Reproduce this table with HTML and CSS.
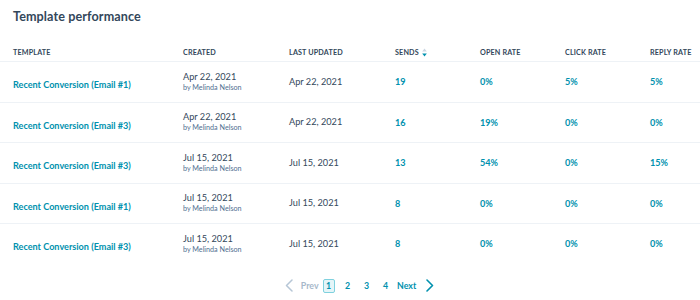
FILE: index.html
```html
<!DOCTYPE html>
<html>
<head>
<meta charset="utf-8">
<link rel="stylesheet" href="styles.css">
</head>
<body>
<div class="card">
  <h1 class="title">Template performance</h1>
  <table class="perf">
    <colgroup>
      <col class="c-tpl"><col class="c-created"><col class="c-upd"><col class="c-num"><col class="c-num"><col class="c-num"><col class="c-last">
    </colgroup>
    <thead>
      <tr>
        <th>Template</th>
        <th>Created</th>
        <th>Last updated</th>
        <th><span class="sortable">Sends <svg class="sort" width="5" height="9" viewBox="0 0 5 9"><path d="M2.5 0.5 L4.8 3.5 L0.2 3.5 Z" fill="#cbd6e2"/><path d="M2.5 8.5 L4.8 5.5 L0.2 5.5 Z" fill="#0091ae"/></svg></span></th>
        <th>Open rate</th>
        <th>Click rate</th>
        <th>Reply rate</th>
      </tr>
    </thead>
    <tbody>
      <tr>
        <td><a class="link">Recent Conversion (Email #1)</a></td>
        <td><div class="date">Apr 22, 2021</div><div class="by">by Melinda Nelson</div></td>
        <td class="date">Apr 22, 2021</td>
        <td class="num">19</td><td class="num">0%</td><td class="num">5%</td><td class="num">5%</td>
      </tr>
      <tr>
        <td><a class="link">Recent Conversion (Email #3)</a></td>
        <td><div class="date">Apr 22, 2021</div><div class="by">by Melinda Nelson</div></td>
        <td class="date">Apr 22, 2021</td>
        <td class="num">16</td><td class="num">19%</td><td class="num">0%</td><td class="num">0%</td>
      </tr>
      <tr>
        <td><a class="link">Recent Conversion (Email #3)</a></td>
        <td><div class="date">Jul 15, 2021</div><div class="by">by Melinda Nelson</div></td>
        <td class="date">Jul 15, 2021</td>
        <td class="num">13</td><td class="num">54%</td><td class="num">0%</td><td class="num">15%</td>
      </tr>
      <tr>
        <td><a class="link">Recent Conversion (Email #1)</a></td>
        <td><div class="date">Jul 15, 2021</div><div class="by">by Melinda Nelson</div></td>
        <td class="date">Jul 15, 2021</td>
        <td class="num">8</td><td class="num">0%</td><td class="num">0%</td><td class="num">0%</td>
      </tr>
      <tr>
        <td><a class="link">Recent Conversion (Email #3)</a></td>
        <td><div class="date">Jul 15, 2021</div><div class="by">by Melinda Nelson</div></td>
        <td class="date">Jul 15, 2021</td>
        <td class="num">8</td><td class="num">0%</td><td class="num">0%</td><td class="num">0%</td>
      </tr>
    </tbody>
  </table>
  <nav class="pager">
    <svg class="chev chev-prev" width="8" height="13" viewBox="0 0 8 13"><path d="M7 1 L1.5 6.5 L7 12" fill="none" stroke="#b6c6d6" stroke-width="1.5" stroke-linecap="round" stroke-linejoin="round"/></svg>
    <span class="prev">Prev</span>
    <span class="page current">1</span>
    <span class="page">2</span>
    <span class="page">3</span>
    <span class="page">4</span>
    <span class="next">Next</span>
    <svg class="chev" width="8" height="13" viewBox="0 0 8 13"><path d="M1 1 L6.5 6.5 L1 12" fill="none" stroke="#0091ae" stroke-width="1.6" stroke-linecap="round" stroke-linejoin="round"/></svg>
  </nav>
</div>
</body>
</html>
```

FILE: styles.css
```css
html, body {
  margin: 0;
  padding: 0;
  background: #ffffff;
}
body {
  font-family: "Lato", "Open Sans", sans-serif;
  color: #33475b;
  width: 700px;
  overflow: hidden;
}
.card {
  padding-top: 8px;
}
.title {
  margin: 0 0 0 13px;
  font-size: 12.6px;
  font-weight: 700;
  line-height: 18px;
  letter-spacing: 0.1px;
  color: #33475b;
}
.perf {
  margin-top: 14px;
  border-collapse: collapse;
  table-layout: fixed;
  width: 720px;
}
.c-tpl { width: 183px; }
.c-created { width: 106px; }
.c-upd { width: 106px; }
.c-num { width: 85px; }
.c-last { width: 70px; }
.perf th {
  text-align: left;
  font-size: 7.2px;
  font-weight: 700;
  text-transform: uppercase;
  letter-spacing: 0.15px;
  color: #33475b;
  padding: 4px 0 0 0;
  height: 17px;
  vertical-align: middle;
  border-bottom: 1px solid #eef2f6;
}
.perf th:first-child, .perf td:first-child {
  padding-left: 13px;
}
.perf td {
  padding: 0;
  height: 39.5px;
  vertical-align: middle;
  border-bottom: 1px solid #eef2f6;
}
.perf tbody tr:last-child td {
  border-bottom: none;
}
.sortable {
  display: inline-flex;
  align-items: center;
  gap: 3px;
}
.link {
  color: #0091ae;
  font-size: 9.1px;
  font-weight: 700;
}
.date {
  font-size: 9.2px;
  color: #33475b;
  line-height: 12px;
}
.by {
  font-size: 7.2px;
  color: #516f90;
  line-height: 10px;
}
.num {
  color: #0091ae;
  font-size: 9.1px;
  font-weight: 700;
}
.pager {
  display: flex;
  align-items: center;
  justify-content: center;
  margin-top: 14px;
  margin-left: 19px;
  height: 16px;
  font-size: 8.8px;
  font-weight: 700;
}
.chev {
  display: block;
}
.prev {
  color: #a7b8ca;
  margin: 0 4px 0 8px;
}
.page {
  color: #0091ae;
  width: 12px;
  text-align: center;
  margin: 0 3.5px;
  line-height: 14px;
}
.page.current {
  background: #e5f5f8;
  border: 1px solid #7fd1de;
  border-radius: 2px;
  width: 10px;
  height: 12px;
  line-height: 12px;
  margin-left: 0;
}
.next {
  color: #0091ae;
  margin: 0 10px 0 2px;
}
```
